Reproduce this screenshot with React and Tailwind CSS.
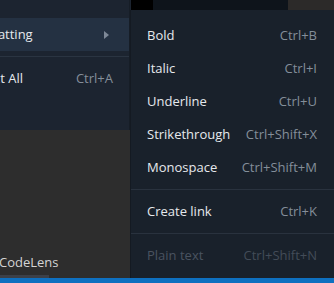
import React from 'react';

const subItems = [
  { label: 'Bold', keys: 'Ctrl+B' },
  { label: 'Italic', keys: 'Ctrl+I' },
  { label: 'Underline', keys: 'Ctrl+U' },
  { label: 'Strikethrough', keys: 'Ctrl+Shift+X' },
  { label: 'Monospace', keys: 'Ctrl+Shift+M' },
  { sep: true },
  { label: 'Create link', keys: 'Ctrl+K' },
  { sep: true },
  { label: 'Plain text', keys: 'Ctrl+Shift+N', disabled: true },
];

const App = () => {
  return (
    <div
      className="relative w-[334px] h-[283px] overflow-hidden flex flex-col bg-[#2d2d2d] text-[13px]"
      style={{ fontFamily: '"Open Sans", "Noto Sans", sans-serif' }}
    >
      {/* top strip */}
      <div className="flex h-[10px] shrink-0">
        <div className="w-[131px] bg-[#1c2430]" />
        <div className="w-[22px] bg-black" />
        <div className="flex-1 bg-[#0e141b]" />
        <div className="w-[46px] bg-[#2c2a29]" />
      </div>

      {/* editor */}
      <div className="flex-1 flex flex-col justify-end">
        <div className="text-[#d4d4d4] leading-none mb-[6px] -ml-[1px]">CodeLens</div>
        <div className="w-[49px] h-[3px] bg-[#3c4048]" />
      </div>

      {/* status bar */}
      <div className="h-[5px] shrink-0 bg-[#0e70c0]" />

      {/* parent menu */}
      <div className="absolute left-0 top-0 w-[130px] h-[130px] bg-[#1c2430] border-r border-[#161d26]">
        <div className="h-[18px]" />
        <div className="h-[33px] bg-[#243142] flex items-center justify-between pr-[20px]">
          <span className="text-[#e6e9ed] -ml-[34px]">Formatting</span>
          <svg width="5" height="8" viewBox="0 0 5 8">
            <path d="M0 0 L5 4 L0 8 Z" fill="#7d8897" />
          </svg>
        </div>
        <div className="h-[11px] flex items-center">
          <div className="w-full h-px bg-[#2a3441]" />
        </div>
        <div className="h-[33px] flex items-center justify-between pr-[16px]">
          <span className="text-[#e6e9ed] -ml-[31px]">Select All</span>
          <span className="text-[#848e9a]">Ctrl+A</span>
        </div>
      </div>

      {/* submenu */}
      <div className="absolute left-[130px] top-[10px] w-[204px] h-[268px] bg-[#19212b] border-l border-[#141a22] pt-[9px]">
        {subItems.map((item, i) =>
          item.sep ? (
            <div key={i} className="h-[11px] flex items-center">
              <div className="w-full h-px bg-[#29323e]" />
            </div>
          ) : (
            <div key={i} className="h-[33px] flex items-center justify-between pl-[16px] pr-[17px]">
              <span className={item.disabled ? 'text-[#4a5360]' : 'text-[#e6e9ed]'}>{item.label}</span>
              <span className={item.disabled ? 'text-[#434c58]' : 'text-[#848e9a]'}>{item.keys}</span>
            </div>
          )
        )}
      </div>
    </div>
  );
};

export default App;
